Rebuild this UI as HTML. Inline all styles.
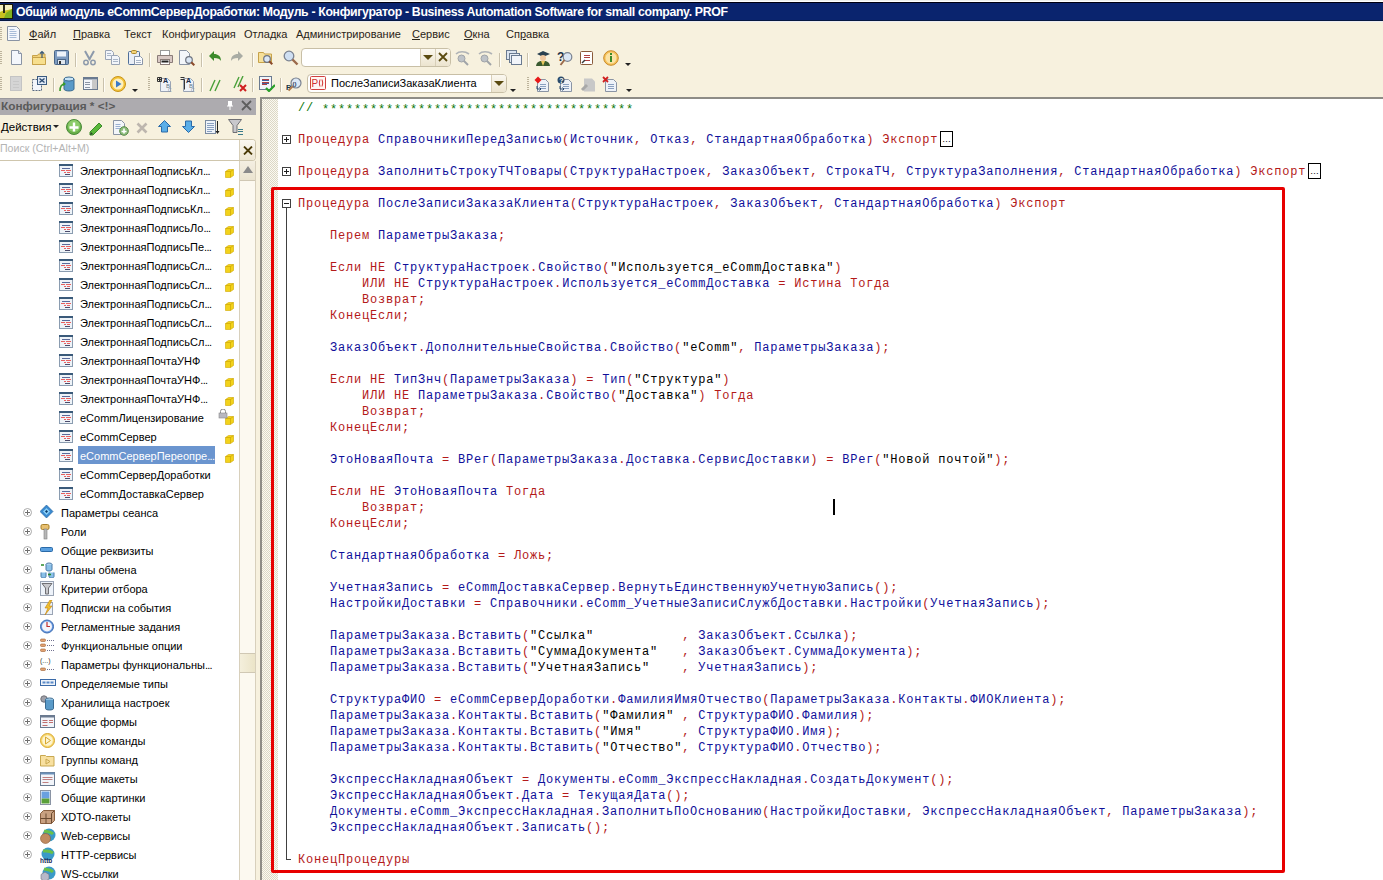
<!DOCTYPE html><html><head><meta charset="utf-8"><style>
*{margin:0;padding:0;box-sizing:border-box}
html,body{width:1383px;height:880px;overflow:hidden;background:#f7f1de;font-family:"Liberation Sans",sans-serif;font-size:11px;color:#000}
.a{position:absolute}
.t{position:absolute;white-space:pre;line-height:13px}
#title{left:0;top:2px;width:1383px;height:19px;background:#0a246e;border-top:1px solid #000010;border-bottom:1px solid #061840}
#title .txt{left:16px;top:2px;color:#fff;font-weight:bold;font-size:12.3px;letter-spacing:-0.34px;line-height:14px}
.menu{top:28px;color:#2a2418}
.menu u{text-decoration:underline}
.sep{position:absolute;width:2px;background:#c9c1ac;border-right:1px solid #fffdf6}
.grip{position:absolute;width:2px;background:repeating-linear-gradient(#bdb49c 0 1px,transparent 1px 2px)}
#code{left:260px;top:97px;width:1123px;height:783px;background:#fff;border-left:2px solid #8e8c86;border-top:2px solid #8e8c86}
#margin{left:262px;top:99px;width:16px;height:781px;background-color:#f4f1e8;background-image:repeating-conic-gradient(#dcd8c6 0 25%,#fbf9f1 0 50%);background-size:2px 2px}
.cl{position:absolute;left:298px;white-space:pre;font-family:"Liberation Mono",monospace;font-size:12px;letter-spacing:0.8px;line-height:16px;height:16px}
.k{color:#b41a1a}.i{color:#10109a}.s{color:#000}.c{color:#0a780a}.p{color:#b41a1a}
.fold{position:absolute;left:282px;width:9px;height:9px;border:1px solid #404040;background:#fff}
.fold:before{content:"";position:absolute;left:1px;top:3px;width:5px;height:1px;background:#202020}
.fold.plus:after{content:"";position:absolute;left:3px;top:1px;width:1px;height:5px;background:#202020}
#panelhdr{left:0;top:98px;width:256px;height:17px;background:#adabaf;border-top:1px solid #9b999d}
#panelhdr .txt{left:1px;top:1px;font-weight:bold;color:#5a5a5a;font-size:11.8px}
.tr{position:absolute;white-space:pre;line-height:13px;color:#000}
</style></head><body><div class="a" style="left:0;top:0;width:1383px;height:2px;background:linear-gradient(#eef0ec 50%,#fff 50%)"></div>
<div id="title" class="a"><div class="a txt">Общий модуль eCommСерверДоработки: Модуль - Конфигуратор - Business Automation Software for small company. PROF</div></div>
<div class="a" style="left:0;top:21px;width:1383px;height:1px;background:#ececf2"></div>
<svg class="a" style="left:0;top:4px" width="14" height="16" viewBox="0 0 14 16"><rect x="0" y="0" width="13" height="15" fill="#1a1a08"/><rect x="0" y="1" width="12" height="13" fill="#f4f0c0"/><path d="M0 8c3-2 6-1 12-3v9H0z" fill="#c8c020"/><path d="M6 9l6-4v9H4z" fill="#80b020"/><rect x="3" y="1" width="2" height="8" fill="#2a2a1a"/></svg>
<div class="t menu" style="left:29px"><u>Ф</u>айл</div>
<div class="t menu" style="left:73px"><u>П</u>равка</div>
<div class="t menu" style="left:124px">Текст</div>
<div class="t menu" style="left:162px">Конфигурация</div>
<div class="t menu" style="left:244px">Отладка</div>
<div class="t menu" style="left:296px">Администрирование</div>
<div class="t menu" style="left:412px"><u>С</u>ервис</div>
<div class="t menu" style="left:464px"><u>О</u>кна</div>
<div class="t menu" style="left:506px">Сп<u>р</u>авка</div>
<div id="code" class="a"></div>
<div id="margin" class="a"></div>
<div class="cl" style="top:100px"><span class="c">// </span><span class="c" style="position:relative;top:2px">***************************************</span></div>
<div class="cl" style="top:132px"><span class="k">Процедура</span> <span class="i">СправочникиПередЗаписью</span><span class="p">(</span><span class="i">Источник</span><span class="p">,</span> <span class="i">Отказ</span><span class="p">,</span> <span class="i">СтандартнаяОбработка</span><span class="p">)</span> <span class="k">Экспорт</span></div>
<div class="cl" style="top:164px"><span class="k">Процедура</span> <span class="i">ЗаполнитьСтрокуТЧТовары</span><span class="p">(</span><span class="i">СтруктураНастроек</span><span class="p">,</span> <span class="i">ЗаказОбъект</span><span class="p">,</span> <span class="i">СтрокаТЧ</span><span class="p">,</span> <span class="i">СтруктураЗаполнения</span><span class="p">,</span> <span class="i">СтандартнаяОбработка</span><span class="p">)</span> <span class="k">Экспорт</span></div>
<div class="cl" style="top:196px"><span class="k">Процедура</span> <span class="i">ПослеЗаписиЗаказаКлиента</span><span class="p">(</span><span class="i">СтруктураНастроек</span><span class="p">,</span> <span class="i">ЗаказОбъект</span><span class="p">,</span> <span class="i">СтандартнаяОбработка</span><span class="p">)</span> <span class="k">Экспорт</span></div>
<div class="cl" style="top:228px">    <span class="k">Перем</span> <span class="i">ПараметрыЗаказа</span><span class="p">;</span></div>
<div class="cl" style="top:260px">    <span class="k">Если</span> <span class="k">НЕ</span> <span class="i">СтруктураНастроек</span><span class="p">.</span><span class="i">Свойство</span><span class="p">(</span><span class="s">&quot;Используется_eCommДоставка&quot;</span><span class="p">)</span></div>
<div class="cl" style="top:276px">        <span class="k">ИЛИ</span> <span class="k">НЕ</span> <span class="i">СтруктураНастроек</span><span class="p">.</span><span class="i">Используется_eCommДоставка</span> <span class="p">=</span> <span class="k">Истина</span> <span class="k">Тогда</span></div>
<div class="cl" style="top:292px">        <span class="k">Возврат</span><span class="p">;</span></div>
<div class="cl" style="top:308px">    <span class="k">КонецЕсли</span><span class="p">;</span></div>
<div class="cl" style="top:340px">    <span class="i">ЗаказОбъект</span><span class="p">.</span><span class="i">ДополнительныеСвойства</span><span class="p">.</span><span class="i">Свойство</span><span class="p">(</span><span class="s">&quot;eComm&quot;</span><span class="p">,</span> <span class="i">ПараметрыЗаказа</span><span class="p">)</span><span class="p">;</span></div>
<div class="cl" style="top:372px">    <span class="k">Если</span> <span class="k">НЕ</span> <span class="i">ТипЗнч</span><span class="p">(</span><span class="i">ПараметрыЗаказа</span><span class="p">)</span> <span class="p">=</span> <span class="i">Тип</span><span class="p">(</span><span class="s">&quot;Структура&quot;</span><span class="p">)</span></div>
<div class="cl" style="top:388px">        <span class="k">ИЛИ</span> <span class="k">НЕ</span> <span class="i">ПараметрыЗаказа</span><span class="p">.</span><span class="i">Свойство</span><span class="p">(</span><span class="s">&quot;Доставка&quot;</span><span class="p">)</span> <span class="k">Тогда</span></div>
<div class="cl" style="top:404px">        <span class="k">Возврат</span><span class="p">;</span></div>
<div class="cl" style="top:420px">    <span class="k">КонецЕсли</span><span class="p">;</span></div>
<div class="cl" style="top:452px">    <span class="i">ЭтоНоваяПочта</span> <span class="p">=</span> <span class="i">ВРег</span><span class="p">(</span><span class="i">ПараметрыЗаказа</span><span class="p">.</span><span class="i">Доставка</span><span class="p">.</span><span class="i">СервисДоставки</span><span class="p">)</span> <span class="p">=</span> <span class="i">ВРег</span><span class="p">(</span><span class="s">&quot;Новой почтой&quot;</span><span class="p">)</span><span class="p">;</span></div>
<div class="cl" style="top:484px">    <span class="k">Если</span> <span class="k">НЕ</span> <span class="i">ЭтоНоваяПочта</span> <span class="k">Тогда</span></div>
<div class="cl" style="top:500px">        <span class="k">Возврат</span><span class="p">;</span></div>
<div class="cl" style="top:516px">    <span class="k">КонецЕсли</span><span class="p">;</span></div>
<div class="cl" style="top:548px">    <span class="i">СтандартнаяОбработка</span> <span class="p">=</span> <span class="k">Ложь</span><span class="p">;</span></div>
<div class="cl" style="top:580px">    <span class="i">УчетнаяЗапись</span> <span class="p">=</span> <span class="i">eCommДоставкаСервер</span><span class="p">.</span><span class="i">ВернутьЕдинственнуюУчетнуюЗапись</span><span class="p">(</span><span class="p">)</span><span class="p">;</span></div>
<div class="cl" style="top:596px">    <span class="i">НастройкиДоставки</span> <span class="p">=</span> <span class="i">Справочники</span><span class="p">.</span><span class="i">eComm_УчетныеЗаписиСлужбДоставки</span><span class="p">.</span><span class="i">Настройки</span><span class="p">(</span><span class="i">УчетнаяЗапись</span><span class="p">)</span><span class="p">;</span></div>
<div class="cl" style="top:628px">    <span class="i">ПараметрыЗаказа</span><span class="p">.</span><span class="i">Вставить</span><span class="p">(</span><span class="s">&quot;Ссылка&quot;</span>           <span class="p">,</span> <span class="i">ЗаказОбъект</span><span class="p">.</span><span class="i">Ссылка</span><span class="p">)</span><span class="p">;</span></div>
<div class="cl" style="top:644px">    <span class="i">ПараметрыЗаказа</span><span class="p">.</span><span class="i">Вставить</span><span class="p">(</span><span class="s">&quot;СуммаДокумента&quot;</span>   <span class="p">,</span> <span class="i">ЗаказОбъект</span><span class="p">.</span><span class="i">СуммаДокумента</span><span class="p">)</span><span class="p">;</span></div>
<div class="cl" style="top:660px">    <span class="i">ПараметрыЗаказа</span><span class="p">.</span><span class="i">Вставить</span><span class="p">(</span><span class="s">&quot;УчетнаяЗапись&quot;</span>    <span class="p">,</span> <span class="i">УчетнаяЗапись</span><span class="p">)</span><span class="p">;</span></div>
<div class="cl" style="top:692px">    <span class="i">СтруктураФИО</span> <span class="p">=</span> <span class="i">eCommСерверДоработки</span><span class="p">.</span><span class="i">ФамилияИмяОтчество</span><span class="p">(</span><span class="i">ПараметрыЗаказа</span><span class="p">.</span><span class="i">Контакты</span><span class="p">.</span><span class="i">ФИОКлиента</span><span class="p">)</span><span class="p">;</span></div>
<div class="cl" style="top:708px">    <span class="i">ПараметрыЗаказа</span><span class="p">.</span><span class="i">Контакты</span><span class="p">.</span><span class="i">Вставить</span><span class="p">(</span><span class="s">&quot;Фамилия&quot;</span> <span class="p">,</span> <span class="i">СтруктураФИО</span><span class="p">.</span><span class="i">Фамилия</span><span class="p">)</span><span class="p">;</span></div>
<div class="cl" style="top:724px">    <span class="i">ПараметрыЗаказа</span><span class="p">.</span><span class="i">Контакты</span><span class="p">.</span><span class="i">Вставить</span><span class="p">(</span><span class="s">&quot;Имя&quot;</span>     <span class="p">,</span> <span class="i">СтруктураФИО</span><span class="p">.</span><span class="i">Имя</span><span class="p">)</span><span class="p">;</span></div>
<div class="cl" style="top:740px">    <span class="i">ПараметрыЗаказа</span><span class="p">.</span><span class="i">Контакты</span><span class="p">.</span><span class="i">Вставить</span><span class="p">(</span><span class="s">&quot;Отчество&quot;</span><span class="p">,</span> <span class="i">СтруктураФИО</span><span class="p">.</span><span class="i">Отчество</span><span class="p">)</span><span class="p">;</span></div>
<div class="cl" style="top:772px">    <span class="i">ЭкспрессНакладнаяОбъект</span> <span class="p">=</span> <span class="i">Документы</span><span class="p">.</span><span class="i">eComm_ЭкспрессНакладная</span><span class="p">.</span><span class="i">СоздатьДокумент</span><span class="p">(</span><span class="p">)</span><span class="p">;</span></div>
<div class="cl" style="top:788px">    <span class="i">ЭкспрессНакладнаяОбъект</span><span class="p">.</span><span class="i">Дата</span> <span class="p">=</span> <span class="i">ТекущаяДата</span><span class="p">(</span><span class="p">)</span><span class="p">;</span></div>
<div class="cl" style="top:804px">    <span class="i">Документы</span><span class="p">.</span><span class="i">eComm_ЭкспрессНакладная</span><span class="p">.</span><span class="i">ЗаполнитьПоОснованию</span><span class="p">(</span><span class="i">НастройкиДоставки</span><span class="p">,</span> <span class="i">ЭкспрессНакладнаяОбъект</span><span class="p">,</span> <span class="i">ПараметрыЗаказа</span><span class="p">)</span><span class="p">;</span></div>
<div class="cl" style="top:820px">    <span class="i">ЭкспрессНакладнаяОбъект</span><span class="p">.</span><span class="i">Записать</span><span class="p">(</span><span class="p">)</span><span class="p">;</span></div>
<div class="cl" style="top:852px"><span class="k">КонецПроцедуры</span></div>
<div class="fold plus" style="top:135px"></div>
<div class="fold plus" style="top:167px"></div>
<div class="fold" style="top:199px"></div>
<div class="a" style="left:286px;top:208px;width:1px;height:652px;background:#404040"></div>
<div class="a" style="left:286px;top:859px;width:5px;height:1px;background:#404040"></div>
<div class="a" style="left:940px;top:131px;width:13px;height:16px;border:1px solid #000;font-size:9px;line-height:14px;text-align:center">…</div>
<div class="a" style="left:1308px;top:163px;width:13px;height:16px;border:1px solid #000;font-size:9px;line-height:14px;text-align:center">…</div>
<div class="a" style="left:271px;top:187px;width:1014px;height:686px;border:3px solid #e80000;border-radius:2px"></div>
<div class="a" style="left:833px;top:499px;width:2px;height:16px;background:#000"></div>
<div id="panelhdr" class="a"><div class="t txt">Конфигурация * &lt;!&gt;</div></div>
<div class="grip" style="left:0px;top:27px;height:13px"></div>
<svg class="a" style="left:7px;top:26px" width="13" height="15" viewBox="0 0 13 15"><path d="M0.5 0.5h9l3 3v11h-12z" fill="#f4f7fc" stroke="#8a94a4"/><path d="M2.5 3.5h5M2.5 5.5h7M2.5 7.5h7M2.5 9.5h7M2.5 11.5h7" stroke="#a8bcd8"/></svg>
<div class="grip" style="left:0px;top:51px;height:13px"></div>
<svg class="a" style="left:9px;top:50px" width="16" height="16" viewBox="0 0 16 16"><path d="M2.5 0.5h7l3 3v11h-10z" fill="#f4f7fc" stroke="#8a94a4"/><path d="M9.5 0.5v3h3" fill="#dfe5ee" stroke="#8a94a4"/></svg>
<svg class="a" style="left:32px;top:50px" width="16" height="16" viewBox="0 0 16 16"><path d="M0.5 5.5h5l1-1.5h6.5v10.5h-12.5z" fill="#f2d27a" stroke="#c7a24a"/><path d="M0.5 7.5h13v7h-13z" fill="#f7df8e" stroke="#c7a24a"/><path d="M10 8V1.5M8 3.5l2-2 2 2" stroke="#3b5a7a" stroke-width="1.2" fill="none"/></svg>
<svg class="a" style="left:54px;top:50px" width="16" height="16" viewBox="0 0 16 16"><rect x="0.5" y="0.5" width="14" height="14" rx="1" fill="#7d9bc0" stroke="#4a6688"/><rect x="3" y="1.5" width="9" height="5" fill="#eef3fa"/><rect x="3.5" y="9.5" width="8" height="5" fill="#dfe6ee" stroke="#4a6688"/><rect x="5" y="11" width="2" height="3" fill="#333"/></svg>
<div class="sep" style="left:75px;top:53px;height:14px"></div>
<svg class="a" style="left:82px;top:50px" width="16" height="16" viewBox="0 0 16 16"><path d="M3 1l5 9M12 1l-5 9" stroke="#8d9aab" stroke-width="2"/><circle cx="4" cy="12.5" r="2.2" fill="none" stroke="#8d9aab" stroke-width="1.5"/><circle cx="11" cy="12.5" r="2.2" fill="none" stroke="#8d9aab" stroke-width="1.5"/></svg>
<svg class="a" style="left:105px;top:50px" width="16" height="16" viewBox="0 0 16 16"><path d="M0.5 0.5h6l2 2v7h-8z" fill="#f2f5fa" stroke="#9aa4b4"/><path d="M6.5 5.5h6l2 2v7h-8z" fill="#f2f5fa" stroke="#9aa4b4"/><path d="M2 3.5h4M2 5.5h4M8 9.5h5M8 11.5h5" stroke="#a9b6c8"/></svg>
<svg class="a" style="left:128px;top:50px" width="16" height="16" viewBox="0 0 16 16"><rect x="0.5" y="1.5" width="11" height="13" rx="1" fill="#e9eef6" stroke="#4f6f99"/><rect x="3.5" y="0.5" width="5" height="3" rx="1" fill="#f3d47a" stroke="#b08a2a"/><path d="M6.5 6.5h6l2 2v6h-8z" fill="#fafbfd" stroke="#8a96a8"/><path d="M8 10.5h5M8 12.5h5" stroke="#a9b6c8"/></svg>
<div class="sep" style="left:149px;top:53px;height:14px"></div>
<svg class="a" style="left:157px;top:50px" width="16" height="16" viewBox="0 0 16 16"><rect x="3.5" y="0.5" width="9" height="5" fill="#fff" stroke="#9a9a9a"/><path d="M0.5 5.5h15v7h-15z" fill="#d8c8c4" stroke="#8a7c78"/><rect x="3.5" y="9.5" width="9" height="5" fill="#fff" stroke="#8a7c78"/><rect x="4.5" y="10.5" width="7" height="2" fill="#222"/></svg>
<svg class="a" style="left:179px;top:50px" width="16" height="16" viewBox="0 0 16 16"><path d="M0.5 0.5h7l3 3v11h-10z" fill="#f3f6fa" stroke="#8a94a4"/><circle cx="10" cy="10" r="3.3" fill="#dbe7f5" stroke="#6e7480" stroke-width="1.2"/><path d="M12.3 12.3l3 3" stroke="#8b4a2a" stroke-width="2"/></svg>
<div class="sep" style="left:201px;top:53px;height:14px"></div>
<svg class="a" style="left:208px;top:50px" width="16" height="16" viewBox="0 0 16 16"><path d="M1 6l5-5v3c4 0 7 2 7 7-1-2-3-3-7-3v3z" fill="#3c8a2a"/></svg>
<svg class="a" style="left:228px;top:50px" width="16" height="16" viewBox="0 0 16 16"><path d="M15 6l-5-5v3c-4 0-7 2-7 7 1-2 3-3 7-3v3z" fill="#a9aca4"/></svg>
<div class="sep" style="left:252px;top:53px;height:14px"></div>
<svg class="a" style="left:258px;top:50px" width="16" height="16" viewBox="0 0 16 16"><path d="M0.5 2.5h5l1 1.5h7v8.5h-13z" fill="#f6e09a" stroke="#c7a24a"/><circle cx="9" cy="9" r="3.3" fill="#dbe7f5" stroke="#6e7480" stroke-width="1.2"/><path d="M11.3 11.3l3 3" stroke="#8b4a2a" stroke-width="2"/></svg>
<svg class="a" style="left:283px;top:50px" width="16" height="16" viewBox="0 0 16 16"><circle cx="6" cy="6" r="4.8" fill="#cfdff2" stroke="#7a8290" stroke-width="1.3"/><path d="M9.5 9.5l5 5" stroke="#9b6a4a" stroke-width="2.4"/></svg>
<div class="a" style="left:301px;top:48px;width:150px;height:19px;background:#fff;border:1px solid #c8bfa6;border-radius:4px;overflow:hidden"><div class="a" style="left:118px;top:0;width:30px;height:17px;background:linear-gradient(#fbf8f0,#ece4cf);border-left:1px solid #d8cfb8"></div><div class="a" style="left:133px;top:0;width:1px;height:17px;background:#d8cfb8"></div></div>
<div class="a" style="left:423px;top:55px;width:0;height:0;border-left:5px solid transparent;border-right:5px solid transparent;border-top:5px solid #5a4a10"></div>
<svg class="a" style="left:438px;top:52px" width="10" height="10" viewBox="0 0 10 10"><path d="M1 1l8 8M9 1l-8 8" stroke="#5a4a10" stroke-width="1.8"/></svg>
<svg class="a" style="left:455px;top:50px" width="16" height="16" viewBox="0 0 16 16"><circle cx="6.5" cy="8.5" r="3.5" fill="#bfc3c8" stroke="#a0a4a8"/><path d="M9 11l4 4" stroke="#a0a4a8" stroke-width="2"/><path d="M1 4c3-3 9-3 13 0" stroke="#b0b3b6" stroke-width="1.6" fill="none"/></svg>
<svg class="a" style="left:478px;top:50px" width="16" height="16" viewBox="0 0 16 16"><circle cx="6.5" cy="8.5" r="3.5" fill="#bfc3c8" stroke="#a0a4a8"/><path d="M9 11l4 4" stroke="#a0a4a8" stroke-width="2"/><path d="M1 4c3-3 9-3 13 0" stroke="#b0b3b6" stroke-width="1.6" fill="none"/></svg>
<div class="sep" style="left:499px;top:53px;height:14px"></div>
<svg class="a" style="left:506px;top:50px" width="16" height="16" viewBox="0 0 16 16"><rect x="0.5" y="0.5" width="10" height="9" fill="#dbe4f0" stroke="#6a7a90"/><rect x="3.5" y="3.5" width="10" height="9" fill="#e6edf6" stroke="#6a7a90"/><rect x="5.5" y="5.5" width="10" height="9" fill="#f2f5fa" stroke="#6a7a90"/></svg>
<div class="sep" style="left:527px;top:53px;height:14px"></div>
<svg class="a" style="left:535px;top:50px" width="16" height="16" viewBox="0 0 16 16"><path d="M2 4l6-3 7 3-7 3z" fill="#2a4050"/><circle cx="8" cy="8" r="3" fill="#f0c8a0"/><path d="M1 16c1-5 4-5 7-5s6 0 7 5z" fill="#3a5a30"/><path d="M6 11l2 5 2-5" fill="#e8c860"/></svg>
<svg class="a" style="left:557px;top:50px" width="16" height="16" viewBox="0 0 16 16"><text x="0" y="11" font-size="12" font-weight="bold" fill="#1a3048" font-family="Liberation Sans">?</text><circle cx="10.5" cy="7" r="4.3" fill="#dbe7f5" stroke="#7a8290" stroke-width="1.2"/><path d="M7.5 10l-4 5" stroke="#9b6a4a" stroke-width="2"/></svg>
<svg class="a" style="left:579px;top:50px" width="16" height="16" viewBox="0 0 16 16"><rect x="1.5" y="1.5" width="12" height="13" rx="1" fill="#fff" stroke="#8a5a3a"/><path d="M5 5.5h6M5 7.5h6M5 10.5h6" stroke="#b04040"/><path d="M3 13l3-3" stroke="#3a3a3a" stroke-width="1.5"/></svg>
<svg class="a" style="left:603px;top:50px" width="16" height="16" viewBox="0 0 16 16"><circle cx="8" cy="8" r="7.3" fill="#f6c25a" stroke="#c88a2a"/><circle cx="8" cy="8" r="5.5" fill="#fbe3a6"/><rect x="7" y="6" width="2" height="6" fill="#3a8a2a"/><rect x="7" y="3" width="2" height="2" fill="#3a8a2a"/></svg>
<div class="a" style="left:625px;top:63px;width:0;height:0;border-left:3px solid transparent;border-right:3px solid transparent;border-top:3px solid #222"></div>
<div class="grip" style="left:0px;top:77px;height:13px"></div>
<svg class="a" style="left:10px;top:76px" width="16" height="16" viewBox="0 0 16 16"><rect x="0.5" y="0.5" width="11" height="14" fill="#d5d5d5" stroke="#c4c4c4"/><path d="M3 5.5h6M3 8.5h6M3 11.5h6" stroke="#c8c8c8"/></svg>
<svg class="a" style="left:32px;top:76px" width="16" height="16" viewBox="0 0 16 16"><path d="M0.5 3.5h9v11h-9z" fill="#f2f5fa" stroke="#5a6a80" stroke-dasharray="2 1"/><rect x="5.5" y="0.5" width="9" height="8" fill="#dfe8f4" stroke="#3a5a80"/><path d="M7.5 2.5l5 4M12.5 2.5l-5 4" stroke="#2a4a70" stroke-width="1.4"/></svg>
<div class="sep" style="left:53px;top:78px;height:14px"></div>
<svg class="a" style="left:59px;top:76px" width="16" height="16" viewBox="0 0 16 16"><path d="M5 3v10c0 2.6 10 2.6 10 0V3" fill="#5a9ac8" stroke="#3a6a90"/><ellipse cx="10" cy="3" rx="5" ry="2" fill="#c8e4f6" stroke="#3a6a90"/><path d="M1 15c0-4 1-7 5-7" stroke="#3a9a2a" stroke-width="1.6" fill="none"/><path d="M4 6l3 2-3 2z" fill="#3a9a2a"/></svg>
<svg class="a" style="left:83px;top:76px" width="16" height="16" viewBox="0 0 16 16"><rect x="0.5" y="1.5" width="14" height="12" fill="#f2f5fa" stroke="#6a7a90"/><rect x="0.5" y="1.5" width="14" height="2" fill="#6a7a90"/><rect x="9" y="4" width="5" height="9" fill="#c8c8c8"/><path d="M2 6.5h5M2 8.5h5M2 11.5h5" stroke="#8a94a4"/></svg>
<div class="sep" style="left:103px;top:78px;height:14px"></div>
<svg class="a" style="left:110px;top:76px" width="16" height="16" viewBox="0 0 16 16"><circle cx="8" cy="8" r="7.5" fill="#f4c43a" stroke="#c8941a"/><circle cx="8" cy="8" r="5.5" fill="#fdf0c0"/><path d="M6 4.5l5.5 3.5-5.5 3.5z" fill="#3a7ac8"/></svg>
<div class="a" style="left:132px;top:89px;width:0;height:0;border-left:3px solid transparent;border-right:3px solid transparent;border-top:3px solid #222"></div>
<div class="grip" style="left:148px;top:77px;height:14px"></div>
<svg class="a" style="left:157px;top:76px" width="16" height="16" viewBox="0 0 16 16"><path d="M3.5 2.5h7l3 3v10h-10z" fill="#eef2f8" stroke="#9aa4b4"/><path d="M0.5 1.5h4v4h-4zM0.5 3.5h4M2.5 1.5v4" stroke="#333" fill="none"/><text x="6" y="7" font-size="7" font-weight="bold" fill="#1a2a48" font-family="Liberation Sans">A</text><text x="9" y="12" font-size="6" fill="#6a7a8a" font-family="Liberation Sans">B</text><text x="11" y="16" font-size="5" fill="#8a94a4" font-family="Liberation Sans">C</text></svg>
<svg class="a" style="left:180px;top:76px" width="16" height="16" viewBox="0 0 16 16"><path d="M3.5 2.5h7l3 3v10h-10z" fill="#eef2f8" stroke="#9aa4b4"/><path d="M0.5 1.5h4M0.5 3.5h4v10" stroke="#333" fill="none"/><text x="6" y="7" font-size="7" font-weight="bold" fill="#1a2a48" font-family="Liberation Sans">A</text><text x="9" y="12" font-size="6" fill="#6a7a8a" font-family="Liberation Sans">B</text><text x="11" y="16" font-size="5" fill="#8a94a4" font-family="Liberation Sans">C</text></svg>
<div class="sep" style="left:201px;top:78px;height:14px"></div>
<svg class="a" style="left:209px;top:76px" width="16" height="16" viewBox="0 0 16 16"><path d="M1 15L6 4M6 15L11 4" stroke="#4aa03a" stroke-width="1.4"/></svg>
<svg class="a" style="left:233px;top:76px" width="16" height="16" viewBox="0 0 16 16"><path d="M1 12L6 1M5 11L10 0" stroke="#4aa03a" stroke-width="1.4"/><path d="M7 9l6 6M13 9l-6 6" stroke="#d02020" stroke-width="2"/></svg>
<div class="sep" style="left:252px;top:78px;height:14px"></div>
<svg class="a" style="left:259px;top:76px" width="16" height="16" viewBox="0 0 16 16"><rect x="0.5" y="0.5" width="12" height="13" fill="#f2f5fa" stroke="#6a7a90"/><path d="M3 3.5h7M3 6.5h7M3 8.5h5" stroke="#b04040"/><path d="M3 4.5h7M3 7.5h7" stroke="#4060a0"/><path d="M7 12l3 3 6-6" stroke="#2aa02a" stroke-width="2.2" fill="none"/></svg>
<div class="sep" style="left:280px;top:78px;height:14px"></div>
<svg class="a" style="left:286px;top:76px" width="16" height="16" viewBox="0 0 16 16"><text x="0" y="14" font-size="8" font-weight="bold" fill="#1a3a48" font-family="Liberation Sans">P</text><circle cx="10" cy="7" r="5" fill="#dbe7f5" stroke="#7a8290" stroke-width="1.2"/><text x="6.5" y="9.5" font-size="6" font-weight="bold" fill="#2a3a58" font-family="Liberation Sans">()</text><path d="M6.5 10.5l-4 4" stroke="#b07a4a" stroke-width="2"/></svg>
<div class="a" style="left:307px;top:74px;width:200px;height:19px;background:#fff;border:1px solid #c8bfa6;border-radius:4px;overflow:hidden"><div class="a" style="left:183px;top:0;width:16px;height:17px;background:linear-gradient(#fbf8f0,#ece4cf);border-left:1px solid #d8cfb8"></div></div>
<svg class="a" style="left:310px;top:76px" width="16" height="14" viewBox="0 0 16 14"><rect x="0.5" y="0.5" width="15" height="13" rx="1" fill="#fff6f2" stroke="#d04040"/><text x="1.5" y="11" font-size="10" fill="#d03030" font-family="Liberation Sans">P</text><path d="M10 3.5q-1.5 3.5 0 7M12 3.5q1.5 3.5 0 7" stroke="#d03030" fill="none"/></svg>
<div class="t" style="left:331px;top:77px;font-size:11px">ПослеЗаписиЗаказаКлиента</div>
<div class="a" style="left:494px;top:81px;width:0;height:0;border-left:5px solid transparent;border-right:5px solid transparent;border-top:5px solid #5a4a10"></div>
<div class="a" style="left:510px;top:89px;width:0;height:0;border-left:3px solid transparent;border-right:3px solid transparent;border-top:3px solid #222"></div>
<div class="grip" style="left:527px;top:77px;height:14px"></div>
<svg class="a" style="left:534px;top:76px" width="16" height="16" viewBox="0 0 16 16"><path d="M3.5 3.5h8l3 3v9h-11z" fill="#eef2f8" stroke="#8a94a4"/><path d="M6 8.5h6M6 10.5h6M6 12.5h6" stroke="#8aa0c0"/><path d="M4 0.5l3.5 3.5-3.5 3.5-3.5-3.5z" fill="#e81818"/><path d="M3 10v3h4M5.5 11.5l1.5 1.5-1.5 1.5" stroke="#2a4a70" fill="none"/></svg>
<svg class="a" style="left:557px;top:76px" width="16" height="16" viewBox="0 0 16 16"><path d="M3.5 3.5h8l3 3v9h-11z" fill="#eef2f8" stroke="#8a94a4"/><path d="M6 8.5h6M6 10.5h6M6 12.5h6" stroke="#8aa0c0"/><circle cx="4" cy="4" r="3.5" fill="#2a4a6a"/><text x="2.2" y="7" font-size="7" font-weight="bold" fill="#fff" font-family="Liberation Sans">?</text><path d="M3 10v3h4M5.5 11.5l1.5 1.5-1.5 1.5" stroke="#2a4a70" fill="none"/></svg>
<svg class="a" style="left:580px;top:76px" width="16" height="16" viewBox="0 0 16 16"><path d="M4 2.5h8l3 3v10h-11z" fill="#c8c8c8"/><path d="M2 14l5-5" stroke="#a8a8a8" stroke-width="3"/></svg>
<svg class="a" style="left:602px;top:76px" width="16" height="16" viewBox="0 0 16 16"><path d="M3.5 3.5h8l3 3v9h-11z" fill="#eef2f8" stroke="#8a94a4"/><path d="M6 8.5h6M6 10.5h6M6 12.5h6" stroke="#8aa0c0"/><path d="M1 1l5 5M6 1l-5 5" stroke="#d02020" stroke-width="1.8"/></svg>
<div class="a" style="left:626px;top:89px;width:0;height:0;border-left:3px solid transparent;border-right:3px solid transparent;border-top:3px solid #222"></div>
<svg class="a" style="left:226px;top:101px" width="8" height="9" viewBox="0 0 8 9"><rect x="2" y="0" width="4" height="5" fill="#fff"/><path d="M1 5h6M4 5v4" stroke="#fff"/></svg>
<svg class="a" style="left:241px;top:100px" width="11" height="11" viewBox="0 0 11 11"><path d="M1 1l9 9M10 1l-9 9" stroke="#5e5e5e" stroke-width="1.8"/></svg>
<div class="t" style="left:1px;top:121px;font-size:11.5px">Действия</div>
<div class="a" style="left:53px;top:125px;width:0;height:0;border-left:3px solid transparent;border-right:3px solid transparent;border-top:3px solid #222"></div>
<svg class="a" style="left:66px;top:119px" width="16" height="16" viewBox="0 0 16 16"><circle cx="8" cy="8" r="7.5" fill="#6ab04a" stroke="#4a8a3a"/><circle cx="8" cy="7" r="6" fill="#8ccc6a"/><path d="M8 3.5v9M3.5 8.5h9" stroke="#fff" stroke-width="2.4"/></svg>
<svg class="a" style="left:89px;top:120px" width="16" height="16" viewBox="0 0 16 16"><path d="M1 12l9-9 3 3-9 9H1z" fill="#5ab83a" stroke="#3a8a2a"/><path d="M1 15l1-3 2 2z" fill="#2a4a2a"/></svg>
<svg class="a" style="left:113px;top:120px" width="16" height="16" viewBox="0 0 16 16"><path d="M0.5 0.5h8l3 3v11h-11z" fill="#f3f6fa" stroke="#8a94a4"/><path d="M2.5 4.5h5M2.5 6.5h5M2.5 8.5h5" stroke="#9ab0d0"/><circle cx="11" cy="11" r="4.3" fill="#8cbc7a" stroke="#5a8a4a"/><path d="M11 8.5v5M8.5 11.5h5" stroke="#fff" stroke-width="1.6"/></svg>
<svg class="a" style="left:136px;top:122px" width="12" height="12" viewBox="0 0 12 12"><path d="M1.5 1.5l9 9M10.5 1.5l-9 9" stroke="#bdb6ae" stroke-width="2.6"/></svg>
<svg class="a" style="left:158px;top:120px" width="13" height="13" viewBox="0 0 13 13"><path d="M6.5 0.5l6 6h-3v5.5h-6v-5.5h-3z" fill="#5aaee8" stroke="#2a6aa8"/></svg>
<svg class="a" style="left:182px;top:120px" width="13" height="13" viewBox="0 0 13 13"><path d="M6.5 12.5l6-6h-3v-5.5h-6v5.5h-3z" fill="#5aaee8" stroke="#2a6aa8"/></svg>
<svg class="a" style="left:205px;top:120px" width="15" height="15" viewBox="0 0 15 15"><rect x="0.5" y="0.5" width="10" height="13" fill="#eef3fa" stroke="#7a8aa0"/><path d="M2 3.5h7M2 5.5h7M2 7.5h7M2 9.5h7M2 11.5h5" stroke="#8aa0c0"/><path d="M12.5 1v12" stroke="#222"/><path d="M10.5 11l2 3 2-3z" fill="#222"/></svg>
<svg class="a" style="left:228px;top:119px" width="16" height="16" viewBox="0 0 16 16"><path d="M0.5 0.5h13l-4.5 6v7h-4v-7z" fill="#c8c8cc" stroke="#707074"/><path d="M10 10.5h5M10 12.5h5M10 15.5h5" stroke="#3a7a8a"/></svg>
<div class="a" style="left:0;top:139px;width:256px;height:22px;background:#fff;border:1px solid #cfc6ad;border-left:none;border-radius:0 4px 4px 0;overflow:hidden"><div class="a" style="left:239px;top:0;width:16px;height:20px;background:linear-gradient(#fbf8f0,#ede6d2);border-left:1px solid #d8cfb8"></div></div>
<div class="t" style="left:0;top:142px;font-size:10.6px;color:#b4b4b4">Поиск (Ctrl+Alt+M)</div>
<svg class="a" style="left:243px;top:146px" width="10" height="9" viewBox="0 0 10 9"><path d="M1 0.5l8 8M9 0.5l-8 8" stroke="#4a3a08" stroke-width="1.8"/></svg>
<div class="a" style="left:0;top:161px;width:239px;height:719px;background:#fff"></div>
<div class="a" style="left:239px;top:161px;width:17px;height:719px;background:#fcf9f0;border-left:1px solid #d8d0bc;border-right:1px solid #d8d0bc"></div>
<div class="a" style="left:240px;top:161px;width:15px;height:20px;background:linear-gradient(#f4efe2,#ebe4d0);border-bottom:1px solid #d0c8b4"></div>
<div class="a" style="left:243px;top:166px;width:0;height:0;border-left:5px solid transparent;border-right:5px solid transparent;border-bottom:7px solid #8a8a8a"></div>
<div class="a" style="left:240px;top:653px;width:15px;height:20px;background:linear-gradient(90deg,#f4efdc,#ebe4c8);border-top:1px solid #d0c8b4;border-bottom:1px solid #d0c8b4"></div>
<svg class="a" style="left:59px;top:164px" width="14" height="13" viewBox="0 0 14 13"><rect x="0.5" y="0.5" width="13" height="12" fill="#eef3f8" stroke="#8a9cb0"/><rect x="0" y="0" width="14" height="2" fill="#3a5a7a"/><path d="M3 4.5h8" stroke="#5a6a9a"/><path d="M2 6.5h4M7 6.5h5" stroke="#e86060"/><path d="M5 8.5h2M8 8.5h2M10 8.5h1" stroke="#e86060"/><path d="M6 10.5h5" stroke="#4a4a6a"/></svg>
<div class="tr" style="left:80px;top:165px;font-size:11px;">ЭлектроннаяПодписьКл<span style="letter-spacing:-0.7px">...</span></div>
<svg class="a" style="left:225px;top:169px" width="9" height="9" viewBox="0 0 9 9"><path d="M0.5 2.5l3-2h5v6l-3 2h-5z" fill="#f2d21a" stroke="#d0a800" stroke-width="0.6"/><path d="M5.5 2.5v6M0.5 2.5h5l3-2" stroke="#c8a000" stroke-width="0.6" fill="none"/></svg>
<svg class="a" style="left:59px;top:183px" width="14" height="13" viewBox="0 0 14 13"><rect x="0.5" y="0.5" width="13" height="12" fill="#eef3f8" stroke="#8a9cb0"/><rect x="0" y="0" width="14" height="2" fill="#3a5a7a"/><path d="M3 4.5h8" stroke="#5a6a9a"/><path d="M2 6.5h4M7 6.5h5" stroke="#e86060"/><path d="M5 8.5h2M8 8.5h2M10 8.5h1" stroke="#e86060"/><path d="M6 10.5h5" stroke="#4a4a6a"/></svg>
<div class="tr" style="left:80px;top:184px;font-size:11px;">ЭлектроннаяПодписьКл<span style="letter-spacing:-0.7px">...</span></div>
<svg class="a" style="left:225px;top:188px" width="9" height="9" viewBox="0 0 9 9"><path d="M0.5 2.5l3-2h5v6l-3 2h-5z" fill="#f2d21a" stroke="#d0a800" stroke-width="0.6"/><path d="M5.5 2.5v6M0.5 2.5h5l3-2" stroke="#c8a000" stroke-width="0.6" fill="none"/></svg>
<svg class="a" style="left:59px;top:202px" width="14" height="13" viewBox="0 0 14 13"><rect x="0.5" y="0.5" width="13" height="12" fill="#eef3f8" stroke="#8a9cb0"/><rect x="0" y="0" width="14" height="2" fill="#3a5a7a"/><path d="M3 4.5h8" stroke="#5a6a9a"/><path d="M2 6.5h4M7 6.5h5" stroke="#e86060"/><path d="M5 8.5h2M8 8.5h2M10 8.5h1" stroke="#e86060"/><path d="M6 10.5h5" stroke="#4a4a6a"/></svg>
<div class="tr" style="left:80px;top:203px;font-size:11px;">ЭлектроннаяПодписьКл<span style="letter-spacing:-0.7px">...</span></div>
<svg class="a" style="left:225px;top:207px" width="9" height="9" viewBox="0 0 9 9"><path d="M0.5 2.5l3-2h5v6l-3 2h-5z" fill="#f2d21a" stroke="#d0a800" stroke-width="0.6"/><path d="M5.5 2.5v6M0.5 2.5h5l3-2" stroke="#c8a000" stroke-width="0.6" fill="none"/></svg>
<svg class="a" style="left:59px;top:221px" width="14" height="13" viewBox="0 0 14 13"><rect x="0.5" y="0.5" width="13" height="12" fill="#eef3f8" stroke="#8a9cb0"/><rect x="0" y="0" width="14" height="2" fill="#3a5a7a"/><path d="M3 4.5h8" stroke="#5a6a9a"/><path d="M2 6.5h4M7 6.5h5" stroke="#e86060"/><path d="M5 8.5h2M8 8.5h2M10 8.5h1" stroke="#e86060"/><path d="M6 10.5h5" stroke="#4a4a6a"/></svg>
<div class="tr" style="left:80px;top:222px;font-size:11px;">ЭлектроннаяПодписьЛо<span style="letter-spacing:-0.7px">...</span></div>
<svg class="a" style="left:225px;top:226px" width="9" height="9" viewBox="0 0 9 9"><path d="M0.5 2.5l3-2h5v6l-3 2h-5z" fill="#f2d21a" stroke="#d0a800" stroke-width="0.6"/><path d="M5.5 2.5v6M0.5 2.5h5l3-2" stroke="#c8a000" stroke-width="0.6" fill="none"/></svg>
<svg class="a" style="left:59px;top:240px" width="14" height="13" viewBox="0 0 14 13"><rect x="0.5" y="0.5" width="13" height="12" fill="#eef3f8" stroke="#8a9cb0"/><rect x="0" y="0" width="14" height="2" fill="#3a5a7a"/><path d="M3 4.5h8" stroke="#5a6a9a"/><path d="M2 6.5h4M7 6.5h5" stroke="#e86060"/><path d="M5 8.5h2M8 8.5h2M10 8.5h1" stroke="#e86060"/><path d="M6 10.5h5" stroke="#4a4a6a"/></svg>
<div class="tr" style="left:80px;top:241px;font-size:11px;">ЭлектроннаяПодписьПе<span style="letter-spacing:-0.7px">...</span></div>
<svg class="a" style="left:225px;top:245px" width="9" height="9" viewBox="0 0 9 9"><path d="M0.5 2.5l3-2h5v6l-3 2h-5z" fill="#f2d21a" stroke="#d0a800" stroke-width="0.6"/><path d="M5.5 2.5v6M0.5 2.5h5l3-2" stroke="#c8a000" stroke-width="0.6" fill="none"/></svg>
<svg class="a" style="left:59px;top:259px" width="14" height="13" viewBox="0 0 14 13"><rect x="0.5" y="0.5" width="13" height="12" fill="#eef3f8" stroke="#8a9cb0"/><rect x="0" y="0" width="14" height="2" fill="#3a5a7a"/><path d="M3 4.5h8" stroke="#5a6a9a"/><path d="M2 6.5h4M7 6.5h5" stroke="#e86060"/><path d="M5 8.5h2M8 8.5h2M10 8.5h1" stroke="#e86060"/><path d="M6 10.5h5" stroke="#4a4a6a"/></svg>
<div class="tr" style="left:80px;top:260px;font-size:11px;">ЭлектроннаяПодписьСл<span style="letter-spacing:-0.7px">...</span></div>
<svg class="a" style="left:225px;top:264px" width="9" height="9" viewBox="0 0 9 9"><path d="M0.5 2.5l3-2h5v6l-3 2h-5z" fill="#f2d21a" stroke="#d0a800" stroke-width="0.6"/><path d="M5.5 2.5v6M0.5 2.5h5l3-2" stroke="#c8a000" stroke-width="0.6" fill="none"/></svg>
<svg class="a" style="left:59px;top:278px" width="14" height="13" viewBox="0 0 14 13"><rect x="0.5" y="0.5" width="13" height="12" fill="#eef3f8" stroke="#8a9cb0"/><rect x="0" y="0" width="14" height="2" fill="#3a5a7a"/><path d="M3 4.5h8" stroke="#5a6a9a"/><path d="M2 6.5h4M7 6.5h5" stroke="#e86060"/><path d="M5 8.5h2M8 8.5h2M10 8.5h1" stroke="#e86060"/><path d="M6 10.5h5" stroke="#4a4a6a"/></svg>
<div class="tr" style="left:80px;top:279px;font-size:11px;">ЭлектроннаяПодписьСл<span style="letter-spacing:-0.7px">...</span></div>
<svg class="a" style="left:225px;top:283px" width="9" height="9" viewBox="0 0 9 9"><path d="M0.5 2.5l3-2h5v6l-3 2h-5z" fill="#f2d21a" stroke="#d0a800" stroke-width="0.6"/><path d="M5.5 2.5v6M0.5 2.5h5l3-2" stroke="#c8a000" stroke-width="0.6" fill="none"/></svg>
<svg class="a" style="left:59px;top:297px" width="14" height="13" viewBox="0 0 14 13"><rect x="0.5" y="0.5" width="13" height="12" fill="#eef3f8" stroke="#8a9cb0"/><rect x="0" y="0" width="14" height="2" fill="#3a5a7a"/><path d="M3 4.5h8" stroke="#5a6a9a"/><path d="M2 6.5h4M7 6.5h5" stroke="#e86060"/><path d="M5 8.5h2M8 8.5h2M10 8.5h1" stroke="#e86060"/><path d="M6 10.5h5" stroke="#4a4a6a"/></svg>
<div class="tr" style="left:80px;top:298px;font-size:11px;">ЭлектроннаяПодписьСл<span style="letter-spacing:-0.7px">...</span></div>
<svg class="a" style="left:225px;top:302px" width="9" height="9" viewBox="0 0 9 9"><path d="M0.5 2.5l3-2h5v6l-3 2h-5z" fill="#f2d21a" stroke="#d0a800" stroke-width="0.6"/><path d="M5.5 2.5v6M0.5 2.5h5l3-2" stroke="#c8a000" stroke-width="0.6" fill="none"/></svg>
<svg class="a" style="left:59px;top:316px" width="14" height="13" viewBox="0 0 14 13"><rect x="0.5" y="0.5" width="13" height="12" fill="#eef3f8" stroke="#8a9cb0"/><rect x="0" y="0" width="14" height="2" fill="#3a5a7a"/><path d="M3 4.5h8" stroke="#5a6a9a"/><path d="M2 6.5h4M7 6.5h5" stroke="#e86060"/><path d="M5 8.5h2M8 8.5h2M10 8.5h1" stroke="#e86060"/><path d="M6 10.5h5" stroke="#4a4a6a"/></svg>
<div class="tr" style="left:80px;top:317px;font-size:11px;">ЭлектроннаяПодписьСл<span style="letter-spacing:-0.7px">...</span></div>
<svg class="a" style="left:225px;top:321px" width="9" height="9" viewBox="0 0 9 9"><path d="M0.5 2.5l3-2h5v6l-3 2h-5z" fill="#f2d21a" stroke="#d0a800" stroke-width="0.6"/><path d="M5.5 2.5v6M0.5 2.5h5l3-2" stroke="#c8a000" stroke-width="0.6" fill="none"/></svg>
<svg class="a" style="left:59px;top:335px" width="14" height="13" viewBox="0 0 14 13"><rect x="0.5" y="0.5" width="13" height="12" fill="#eef3f8" stroke="#8a9cb0"/><rect x="0" y="0" width="14" height="2" fill="#3a5a7a"/><path d="M3 4.5h8" stroke="#5a6a9a"/><path d="M2 6.5h4M7 6.5h5" stroke="#e86060"/><path d="M5 8.5h2M8 8.5h2M10 8.5h1" stroke="#e86060"/><path d="M6 10.5h5" stroke="#4a4a6a"/></svg>
<div class="tr" style="left:80px;top:336px;font-size:11px;">ЭлектроннаяПодписьСл<span style="letter-spacing:-0.7px">...</span></div>
<svg class="a" style="left:225px;top:340px" width="9" height="9" viewBox="0 0 9 9"><path d="M0.5 2.5l3-2h5v6l-3 2h-5z" fill="#f2d21a" stroke="#d0a800" stroke-width="0.6"/><path d="M5.5 2.5v6M0.5 2.5h5l3-2" stroke="#c8a000" stroke-width="0.6" fill="none"/></svg>
<svg class="a" style="left:59px;top:354px" width="14" height="13" viewBox="0 0 14 13"><rect x="0.5" y="0.5" width="13" height="12" fill="#eef3f8" stroke="#8a9cb0"/><rect x="0" y="0" width="14" height="2" fill="#3a5a7a"/><path d="M3 4.5h8" stroke="#5a6a9a"/><path d="M2 6.5h4M7 6.5h5" stroke="#e86060"/><path d="M5 8.5h2M8 8.5h2M10 8.5h1" stroke="#e86060"/><path d="M6 10.5h5" stroke="#4a4a6a"/></svg>
<div class="tr" style="left:80px;top:355px;font-size:11px;">ЭлектроннаяПочтаУНФ</div>
<svg class="a" style="left:225px;top:359px" width="9" height="9" viewBox="0 0 9 9"><path d="M0.5 2.5l3-2h5v6l-3 2h-5z" fill="#f2d21a" stroke="#d0a800" stroke-width="0.6"/><path d="M5.5 2.5v6M0.5 2.5h5l3-2" stroke="#c8a000" stroke-width="0.6" fill="none"/></svg>
<svg class="a" style="left:59px;top:373px" width="14" height="13" viewBox="0 0 14 13"><rect x="0.5" y="0.5" width="13" height="12" fill="#eef3f8" stroke="#8a9cb0"/><rect x="0" y="0" width="14" height="2" fill="#3a5a7a"/><path d="M3 4.5h8" stroke="#5a6a9a"/><path d="M2 6.5h4M7 6.5h5" stroke="#e86060"/><path d="M5 8.5h2M8 8.5h2M10 8.5h1" stroke="#e86060"/><path d="M6 10.5h5" stroke="#4a4a6a"/></svg>
<div class="tr" style="left:80px;top:374px;font-size:11px;">ЭлектроннаяПочтаУНФ<span style="letter-spacing:-0.7px">...</span></div>
<svg class="a" style="left:225px;top:378px" width="9" height="9" viewBox="0 0 9 9"><path d="M0.5 2.5l3-2h5v6l-3 2h-5z" fill="#f2d21a" stroke="#d0a800" stroke-width="0.6"/><path d="M5.5 2.5v6M0.5 2.5h5l3-2" stroke="#c8a000" stroke-width="0.6" fill="none"/></svg>
<svg class="a" style="left:59px;top:392px" width="14" height="13" viewBox="0 0 14 13"><rect x="0.5" y="0.5" width="13" height="12" fill="#eef3f8" stroke="#8a9cb0"/><rect x="0" y="0" width="14" height="2" fill="#3a5a7a"/><path d="M3 4.5h8" stroke="#5a6a9a"/><path d="M2 6.5h4M7 6.5h5" stroke="#e86060"/><path d="M5 8.5h2M8 8.5h2M10 8.5h1" stroke="#e86060"/><path d="M6 10.5h5" stroke="#4a4a6a"/></svg>
<div class="tr" style="left:80px;top:393px;font-size:11px;">ЭлектроннаяПочтаУНФ<span style="letter-spacing:-0.7px">...</span></div>
<svg class="a" style="left:225px;top:397px" width="9" height="9" viewBox="0 0 9 9"><path d="M0.5 2.5l3-2h5v6l-3 2h-5z" fill="#f2d21a" stroke="#d0a800" stroke-width="0.6"/><path d="M5.5 2.5v6M0.5 2.5h5l3-2" stroke="#c8a000" stroke-width="0.6" fill="none"/></svg>
<svg class="a" style="left:59px;top:411px" width="14" height="13" viewBox="0 0 14 13"><rect x="0.5" y="0.5" width="13" height="12" fill="#eef3f8" stroke="#8a9cb0"/><rect x="0" y="0" width="14" height="2" fill="#3a5a7a"/><path d="M3 4.5h8" stroke="#5a6a9a"/><path d="M2 6.5h4M7 6.5h5" stroke="#e86060"/><path d="M5 8.5h2M8 8.5h2M10 8.5h1" stroke="#e86060"/><path d="M6 10.5h5" stroke="#4a4a6a"/></svg>
<div class="tr" style="left:80px;top:412px;font-size:11px;">eCommЛицензирование</div>
<svg class="a" style="left:225px;top:416px" width="9" height="9" viewBox="0 0 9 9"><path d="M0.5 2.5l3-2h5v6l-3 2h-5z" fill="#f2d21a" stroke="#d0a800" stroke-width="0.6"/><path d="M5.5 2.5v6M0.5 2.5h5l3-2" stroke="#c8a000" stroke-width="0.6" fill="none"/></svg>
<svg class="a" style="left:218px;top:409px" width="10" height="10" viewBox="0 0 10 10"><path d="M2.5 4V2.5a2.5 2.5 0 015 0V4" stroke="#8a8a8a" fill="none"/><rect x="1" y="4" width="8" height="5" fill="#b8b8c0" stroke="#8a8a8a" stroke-width="0.6"/></svg>
<svg class="a" style="left:59px;top:430px" width="14" height="13" viewBox="0 0 14 13"><rect x="0.5" y="0.5" width="13" height="12" fill="#eef3f8" stroke="#8a9cb0"/><rect x="0" y="0" width="14" height="2" fill="#3a5a7a"/><path d="M3 4.5h8" stroke="#5a6a9a"/><path d="M2 6.5h4M7 6.5h5" stroke="#e86060"/><path d="M5 8.5h2M8 8.5h2M10 8.5h1" stroke="#e86060"/><path d="M6 10.5h5" stroke="#4a4a6a"/></svg>
<div class="tr" style="left:80px;top:431px;font-size:11px;">eCommСервер</div>
<svg class="a" style="left:225px;top:435px" width="9" height="9" viewBox="0 0 9 9"><path d="M0.5 2.5l3-2h5v6l-3 2h-5z" fill="#f2d21a" stroke="#d0a800" stroke-width="0.6"/><path d="M5.5 2.5v6M0.5 2.5h5l3-2" stroke="#c8a000" stroke-width="0.6" fill="none"/></svg>
<div class="a" style="left:78px;top:446px;width:137px;height:18px;background:#6b95cf"></div>
<svg class="a" style="left:59px;top:449px" width="14" height="13" viewBox="0 0 14 13"><rect x="0.5" y="0.5" width="13" height="12" fill="#eef3f8" stroke="#8a9cb0"/><rect x="0" y="0" width="14" height="2" fill="#3a5a7a"/><path d="M3 4.5h8" stroke="#5a6a9a"/><path d="M2 6.5h4M7 6.5h5" stroke="#e86060"/><path d="M5 8.5h2M8 8.5h2M10 8.5h1" stroke="#e86060"/><path d="M6 10.5h5" stroke="#4a4a6a"/></svg>
<div class="tr" style="left:80px;top:450px;font-size:11px;color:#fff">eCommСерверПереопре<span style="letter-spacing:-0.7px">...</span></div>
<svg class="a" style="left:225px;top:454px" width="9" height="9" viewBox="0 0 9 9"><path d="M0.5 2.5l3-2h5v6l-3 2h-5z" fill="#f2d21a" stroke="#d0a800" stroke-width="0.6"/><path d="M5.5 2.5v6M0.5 2.5h5l3-2" stroke="#c8a000" stroke-width="0.6" fill="none"/></svg>
<svg class="a" style="left:59px;top:468px" width="14" height="13" viewBox="0 0 14 13"><rect x="0.5" y="0.5" width="13" height="12" fill="#eef3f8" stroke="#8a9cb0"/><rect x="0" y="0" width="14" height="2" fill="#3a5a7a"/><path d="M3 4.5h8" stroke="#5a6a9a"/><path d="M2 6.5h4M7 6.5h5" stroke="#e86060"/><path d="M5 8.5h2M8 8.5h2M10 8.5h1" stroke="#e86060"/><path d="M6 10.5h5" stroke="#4a4a6a"/></svg>
<div class="tr" style="left:80px;top:469px;font-size:11px;">eCommСерверДоработки</div>
<svg class="a" style="left:59px;top:487px" width="14" height="13" viewBox="0 0 14 13"><rect x="0.5" y="0.5" width="13" height="12" fill="#eef3f8" stroke="#8a9cb0"/><rect x="0" y="0" width="14" height="2" fill="#3a5a7a"/><path d="M3 4.5h8" stroke="#5a6a9a"/><path d="M2 6.5h4M7 6.5h5" stroke="#e86060"/><path d="M5 8.5h2M8 8.5h2M10 8.5h1" stroke="#e86060"/><path d="M6 10.5h5" stroke="#4a4a6a"/></svg>
<div class="tr" style="left:80px;top:488px;font-size:11px;">eCommДоставкаСервер</div>
<svg class="a" style="left:23px;top:508px" width="9" height="9" viewBox="0 0 9 9"><circle cx="4.5" cy="4.5" r="4" fill="#fff" stroke="#a8a8a8"/><path d="M4.5 2v5M2 4.5h5" stroke="#707070"/></svg>
<svg class="a" style="left:40px;top:505px" width="16" height="16" viewBox="0 0 16 16"><path d="M6.5 0l6.5 6.5-6.5 6.5-6.5-6.5z" fill="#3a8ad0" stroke="#1a5a98" stroke-width="0.6"/><path d="M6.5 3l3.5 3.5-3.5 3.5-3.5-3.5z" fill="#8ad0f8"/><path d="M6.5 5l1.5 1.5-1.5 1.5-1.5-1.5z" fill="#0a3a6a"/></svg>
<div class="tr" style="left:61px;top:507px;font-size:11px">Параметры сеанса</div>
<svg class="a" style="left:23px;top:527px" width="9" height="9" viewBox="0 0 9 9"><circle cx="4.5" cy="4.5" r="4" fill="#fff" stroke="#a8a8a8"/><path d="M4.5 2v5M2 4.5h5" stroke="#707070"/></svg>
<svg class="a" style="left:40px;top:524px" width="16" height="16" viewBox="0 0 16 16"><rect x="1" y="0.5" width="8" height="5" rx="1.5" fill="#e8c070" stroke="#a8802a"/><rect x="4" y="5" width="3" height="10" fill="#b8b8b8" stroke="#808080" stroke-width="0.6"/></svg>
<div class="tr" style="left:61px;top:526px;font-size:11px">Роли</div>
<svg class="a" style="left:23px;top:546px" width="9" height="9" viewBox="0 0 9 9"><circle cx="4.5" cy="4.5" r="4" fill="#fff" stroke="#a8a8a8"/><path d="M4.5 2v5M2 4.5h5" stroke="#707070"/></svg>
<svg class="a" style="left:40px;top:543px" width="16" height="16" viewBox="0 0 16 16"><rect x="0.5" y="4.5" width="12" height="4" rx="1" fill="#5aa0e0" stroke="#2a6aa8"/></svg>
<div class="tr" style="left:61px;top:545px;font-size:11px">Общие реквизиты</div>
<svg class="a" style="left:23px;top:565px" width="9" height="9" viewBox="0 0 9 9"><circle cx="4.5" cy="4.5" r="4" fill="#fff" stroke="#a8a8a8"/><path d="M4.5 2v5M2 4.5h5" stroke="#707070"/></svg>
<svg class="a" style="left:40px;top:562px" width="16" height="16" viewBox="0 0 16 16"><ellipse cx="9" cy="2.5" rx="3" ry="1.5" fill="#c8e0f4" stroke="#4a7aa8"/><path d="M6 2.5v5c0 2 6 2 6 0v-5" fill="#8ac0e8" stroke="#4a7aa8"/><path d="M1 10.5v4c0 2 5 2 5 0v-4M9 10.5v4c0 2 5 2 5 0v-4" fill="#8ac0e8" stroke="#4a7aa8"/><path d="M1 3l3 0M11 12.5h-3" stroke="#2a8a2a" stroke-width="1.4"/></svg>
<div class="tr" style="left:61px;top:564px;font-size:11px">Планы обмена</div>
<svg class="a" style="left:23px;top:584px" width="9" height="9" viewBox="0 0 9 9"><circle cx="4.5" cy="4.5" r="4" fill="#fff" stroke="#a8a8a8"/><path d="M4.5 2v5M2 4.5h5" stroke="#707070"/></svg>
<svg class="a" style="left:40px;top:581px" width="16" height="16" viewBox="0 0 16 16"><rect x="0.5" y="0.5" width="13" height="14" fill="#eef3fa" stroke="#9aa4b4"/><path d="M2 2.5h10l-3.5 4.5v6h-3v-6z" fill="#c8c8cc" stroke="#707074"/></svg>
<div class="tr" style="left:61px;top:583px;font-size:11px">Критерии отбора</div>
<svg class="a" style="left:23px;top:603px" width="9" height="9" viewBox="0 0 9 9"><circle cx="4.5" cy="4.5" r="4" fill="#fff" stroke="#a8a8a8"/><path d="M4.5 2v5M2 4.5h5" stroke="#707070"/></svg>
<svg class="a" style="left:40px;top:600px" width="16" height="16" viewBox="0 0 16 16"><rect x="0.5" y="2.5" width="12" height="12" fill="#eef3fa" stroke="#9aa4b4"/><path d="M10 0l-5 8h3l-3 7 7-9h-3l3-6z" fill="#f0c030" stroke="#c08010" stroke-width="0.6"/></svg>
<div class="tr" style="left:61px;top:602px;font-size:11px">Подписки на события</div>
<svg class="a" style="left:23px;top:622px" width="9" height="9" viewBox="0 0 9 9"><circle cx="4.5" cy="4.5" r="4" fill="#fff" stroke="#a8a8a8"/><path d="M4.5 2v5M2 4.5h5" stroke="#707070"/></svg>
<svg class="a" style="left:40px;top:619px" width="16" height="16" viewBox="0 0 16 16"><circle cx="7" cy="7.5" r="6.5" fill="#6a9ae0" stroke="#3a6ab0"/><circle cx="7" cy="7.5" r="5" fill="#f4f4fa"/><path d="M7 3v4.5h3" stroke="#c03030" stroke-width="1.2" fill="none"/></svg>
<div class="tr" style="left:61px;top:621px;font-size:11px">Регламентные задания</div>
<svg class="a" style="left:23px;top:641px" width="9" height="9" viewBox="0 0 9 9"><circle cx="4.5" cy="4.5" r="4" fill="#fff" stroke="#a8a8a8"/><path d="M4.5 2v5M2 4.5h5" stroke="#707070"/></svg>
<svg class="a" style="left:40px;top:638px" width="16" height="16" viewBox="0 0 16 16"><rect x="0.5" y="1" width="5" height="2.5" rx="1" fill="#e0a070" stroke="#a06030" stroke-width="0.6"/><rect x="0.5" y="6" width="5" height="2.5" rx="1" fill="#e0a070" stroke="#a06030" stroke-width="0.6"/><rect x="0.5" y="11" width="5" height="2.5" rx="1" fill="#e0a070" stroke="#a06030" stroke-width="0.6"/><path d="M7 2.5h7M7 7.5h7M7 12.5h7" stroke="#707090" stroke-dasharray="1 1"/></svg>
<div class="tr" style="left:61px;top:640px;font-size:11px">Функциональные опции</div>
<svg class="a" style="left:23px;top:660px" width="9" height="9" viewBox="0 0 9 9"><circle cx="4.5" cy="4.5" r="4" fill="#fff" stroke="#a8a8a8"/><path d="M4.5 2v5M2 4.5h5" stroke="#707070"/></svg>
<svg class="a" style="left:40px;top:657px" width="16" height="16" viewBox="0 0 16 16"><text x="0" y="6" font-size="7" fill="#333" font-family="Liberation Sans">(...)</text><rect x="0.5" y="11" width="5" height="2.5" rx="1" fill="#e0a070" stroke="#a06030" stroke-width="0.6"/><path d="M7 12.5h7" stroke="#707090" stroke-dasharray="1 1"/></svg>
<div class="tr" style="left:61px;top:659px;font-size:11px">Параметры функциональны<span style="letter-spacing:-0.7px">...</span></div>
<svg class="a" style="left:23px;top:679px" width="9" height="9" viewBox="0 0 9 9"><circle cx="4.5" cy="4.5" r="4" fill="#fff" stroke="#a8a8a8"/><path d="M4.5 2v5M2 4.5h5" stroke="#707070"/></svg>
<svg class="a" style="left:40px;top:676px" width="16" height="16" viewBox="0 0 16 16"><rect x="0.5" y="3.5" width="15" height="6" fill="#eef3fa" stroke="#3a6aa8"/><path d="M2.5 5.5h3v2h-3zM6.5 5.5h3v2h-3zM10.5 5.5h3v2h-3z" fill="#5a8ac8"/></svg>
<div class="tr" style="left:61px;top:678px;font-size:11px">Определяемые типы</div>
<svg class="a" style="left:23px;top:698px" width="9" height="9" viewBox="0 0 9 9"><circle cx="4.5" cy="4.5" r="4" fill="#fff" stroke="#a8a8a8"/><path d="M4.5 2v5M2 4.5h5" stroke="#707070"/></svg>
<svg class="a" style="left:40px;top:695px" width="16" height="16" viewBox="0 0 16 16"><circle cx="4" cy="4" r="3.2" fill="#a0a0a8" stroke="#707078"/><ellipse cx="9.5" cy="4.5" rx="4" ry="1.5" fill="#c8e4f6" stroke="#3a6a90"/><path d="M5.5 4.5v9c0 2 8 2 8 0v-9" fill="#5a9ac8" stroke="#3a6a90"/></svg>
<div class="tr" style="left:61px;top:697px;font-size:11px">Хранилища настроек</div>
<svg class="a" style="left:23px;top:717px" width="9" height="9" viewBox="0 0 9 9"><circle cx="4.5" cy="4.5" r="4" fill="#fff" stroke="#a8a8a8"/><path d="M4.5 2v5M2 4.5h5" stroke="#707070"/></svg>
<svg class="a" style="left:40px;top:714px" width="16" height="16" viewBox="0 0 16 16"><rect x="0.5" y="1.5" width="14" height="12" fill="#f2f5fa" stroke="#6a7a90"/><rect x="0.5" y="1.5" width="14" height="2" fill="#6a7a90"/><path d="M2.5 6.5h5M2.5 8.5h5M2.5 11.5h5M9 6.5h4M9 8.5h4" stroke="#c07070"/></svg>
<div class="tr" style="left:61px;top:716px;font-size:11px">Общие формы</div>
<svg class="a" style="left:23px;top:736px" width="9" height="9" viewBox="0 0 9 9"><circle cx="4.5" cy="4.5" r="4" fill="#fff" stroke="#a8a8a8"/><path d="M4.5 2v5M2 4.5h5" stroke="#707070"/></svg>
<svg class="a" style="left:40px;top:733px" width="16" height="16" viewBox="0 0 16 16"><circle cx="7.5" cy="7.5" r="7" fill="#f8d870" stroke="#d8a830"/><circle cx="7.5" cy="7.5" r="5.3" fill="#fdf4d0"/><path d="M5.5 4l5 3.5-5 3.5z" fill="none" stroke="#d8a830"/></svg>
<div class="tr" style="left:61px;top:735px;font-size:11px">Общие команды</div>
<svg class="a" style="left:23px;top:755px" width="9" height="9" viewBox="0 0 9 9"><circle cx="4.5" cy="4.5" r="4" fill="#fff" stroke="#a8a8a8"/><path d="M4.5 2v5M2 4.5h5" stroke="#707070"/></svg>
<svg class="a" style="left:40px;top:752px" width="16" height="16" viewBox="0 0 16 16"><path d="M0.5 3.5h5l1 1h7.5v9.5h-13.5z" fill="#f8e0a0" stroke="#c8a850"/><path d="M6 7l4 2.5-4 2.5z" fill="none" stroke="#c8a850"/></svg>
<div class="tr" style="left:61px;top:754px;font-size:11px">Группы команд</div>
<svg class="a" style="left:23px;top:774px" width="9" height="9" viewBox="0 0 9 9"><circle cx="4.5" cy="4.5" r="4" fill="#fff" stroke="#a8a8a8"/><path d="M4.5 2v5M2 4.5h5" stroke="#707070"/></svg>
<svg class="a" style="left:40px;top:771px" width="16" height="16" viewBox="0 0 16 16"><rect x="0.5" y="1.5" width="14" height="13" fill="#f2f5fa" stroke="#6a7a90"/><rect x="0.5" y="1.5" width="14" height="2" fill="#6a90b8"/><path d="M2.5 6.5h10M2.5 8.5h10M2.5 11.5h6" stroke="#c08080"/></svg>
<div class="tr" style="left:61px;top:773px;font-size:11px">Общие макеты</div>
<svg class="a" style="left:23px;top:793px" width="9" height="9" viewBox="0 0 9 9"><circle cx="4.5" cy="4.5" r="4" fill="#fff" stroke="#a8a8a8"/><path d="M4.5 2v5M2 4.5h5" stroke="#707070"/></svg>
<svg class="a" style="left:40px;top:790px" width="16" height="16" viewBox="0 0 16 16"><rect x="0.5" y="0.5" width="10" height="14" fill="#fff" stroke="#8a94a4"/><rect x="1.5" y="1.5" width="8" height="7" fill="#6aa0e0"/><rect x="1.5" y="8.5" width="8" height="5" fill="#5aa03a"/></svg>
<div class="tr" style="left:61px;top:792px;font-size:11px">Общие картинки</div>
<svg class="a" style="left:23px;top:812px" width="9" height="9" viewBox="0 0 9 9"><circle cx="4.5" cy="4.5" r="4" fill="#fff" stroke="#a8a8a8"/><path d="M4.5 2v5M2 4.5h5" stroke="#707070"/></svg>
<svg class="a" style="left:40px;top:809px" width="16" height="16" viewBox="0 0 16 16"><path d="M0.5 4.5l3-3h11v10l-3 3h-11z" fill="#c8a080" stroke="#8a6040"/><path d="M0.5 9.5h11M6 4.5v10M11.5 4.5v10M11.5 4.5l3-3" stroke="#6a4a30" fill="none"/></svg>
<div class="tr" style="left:61px;top:811px;font-size:11px">XDTO-пакеты</div>
<svg class="a" style="left:23px;top:831px" width="9" height="9" viewBox="0 0 9 9"><circle cx="4.5" cy="4.5" r="4" fill="#fff" stroke="#a8a8a8"/><path d="M4.5 2v5M2 4.5h5" stroke="#707070"/></svg>
<svg class="a" style="left:40px;top:828px" width="16" height="16" viewBox="0 0 16 16"><circle cx="9" cy="7" r="6.5" fill="#3a9ac8"/><path d="M4 3c3 1 6 0 9 3" stroke="#6ac04a" stroke-width="3" fill="none"/><circle cx="5.5" cy="10.5" r="5" fill="#c08a60" stroke="#8a5a30" stroke-width="0.6"/></svg>
<div class="tr" style="left:61px;top:830px;font-size:11px">Web-сервисы</div>
<svg class="a" style="left:23px;top:850px" width="9" height="9" viewBox="0 0 9 9"><circle cx="4.5" cy="4.5" r="4" fill="#fff" stroke="#a8a8a8"/><path d="M4.5 2v5M2 4.5h5" stroke="#707070"/></svg>
<svg class="a" style="left:40px;top:847px" width="16" height="16" viewBox="0 0 16 16"><circle cx="8" cy="7" r="6.5" fill="#3a9ac8"/><path d="M3 4c3 0 6-1 10 2" stroke="#6ac04a" stroke-width="3" fill="none"/><text x="0" y="15.5" font-size="6.5" font-weight="bold" fill="#1a2a58" font-family="Liberation Sans">http</text></svg>
<div class="tr" style="left:61px;top:849px;font-size:11px">HTTP-сервисы</div>
<svg class="a" style="left:40px;top:866px" width="16" height="16" viewBox="0 0 16 16"><circle cx="9" cy="7" r="6.5" fill="#3a9ac8"/><path d="M4 3c3 1 6 0 9 3" stroke="#6ac04a" stroke-width="3" fill="none"/><path d="M5 6l4 2.5v4.5l-4 2.5-4-2.5v-4.5z" fill="#b8b8c8" stroke="#707080" stroke-width="0.6"/></svg>
<div class="tr" style="left:61px;top:868px;font-size:11px">WS-ссылки</div></body></html>
